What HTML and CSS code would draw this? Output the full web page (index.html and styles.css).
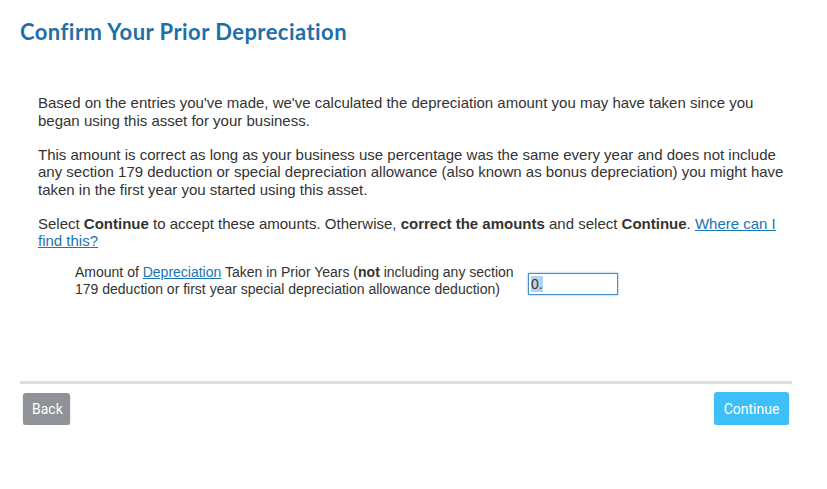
FILE: index.html
```html
<!DOCTYPE html>
<html>
<head>
<meta charset="utf-8">
<link rel="stylesheet" href="styles.css">
</head>
<body>
<div class="page">
  <h1 class="title">Confirm Your Prior Depreciation</h1>
  <div class="content">
    <p>Based on the entries you've made, we've calculated the depreciation amount you may have taken since you began using this asset for your business.</p>
    <p>This amount is correct as long as your business use percentage was the same every year and does not include any section 179 deduction or special depreciation allowance (also known as bonus depreciation) you might have taken in the first year you started using this asset.</p>
    <p class="last">Select <b>Continue</b> to accept these amounts. Otherwise, <b>correct the amounts</b> and select <b>Continue</b>. <a href="#">Where can I find this?</a></p>
    <div class="field">
      <label class="field-label">Amount of <a href="#">Depreciation</a> Taken in Prior Years (<b>not</b> including any section 179 deduction or first year special depreciation allowance deduction)</label>
      <div class="input"><span class="sel">0.</span></div>
    </div>
  </div>
  <div class="footer">
    <button class="btn back">Back</button>
    <button class="btn cont">Continue</button>
  </div>
</div>
</body>
</html>
```
FILE: styles.css
```css
body {
  margin: 0;
  background: #fff;
  font-family: "Liberation Sans", Arial, sans-serif;
  color: #333;
}
.page {
  padding: 18px 35px 0 20px;
}
.title {
  margin: 0;
  font-family: Lato, "Open Sans", sans-serif;
  font-weight: 700;
  font-size: 22px;
  color: #1f6fa8;
  line-height: 28px;
  letter-spacing: 0.45px;
}
.content {
  padding: 48px 2px 0 18px;
  font-size: 15px;
  line-height: 17.5px;
}
.content p {
  margin: 0 0 16.5px 0;
}
.content p.last {
  margin-bottom: 14.5px;
}
.content a {
  color: #1a75b5;
  text-decoration: underline;
}
.field {
  display: flex;
  align-items: center;
  padding-left: 37px;
  font-size: 14px;
}
.field-label {
  width: 445px;
  line-height: 17px;
}
.input {
  margin-left: 8px;
  width: 86px;
  height: 20px;
  border: 1px solid #4a90c8;
  box-shadow: 0 0 2px #6fb0e6;
  margin-top: 5px;
  font-size: 14px;
  line-height: 20px;
  padding-left: 2px;
}
.sel {
  background: #b6d3f0;
  color: #333;
}
.footer {
  margin-top: 83px;
  border-top: 3px solid #dedede;
  padding: 8px 3px 0 3px;
  display: flex;
  justify-content: space-between;
  align-items: flex-start;
}
.btn {
  border: none;
  border-radius: 3px;
  color: #fff;
  font-family: Roboto, "Liberation Sans", sans-serif;
  font-size: 14px;
  height: 33px;
  padding: 0 9px;
  box-shadow: 0 1px 2px rgba(0,0,0,0.2);
}
.back {
  background: #8f9297;
  width: 47px;
  margin-top: 1px;
  height: 32px;
}
.cont {
  background: #3ebff7;
  width: 75px;
}
```
